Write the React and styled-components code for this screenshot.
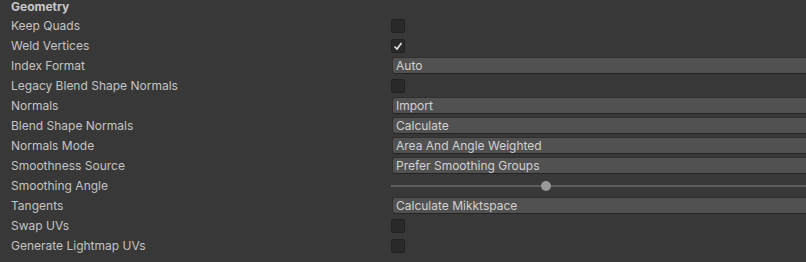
import React from "react";
import styled, { createGlobalStyle } from "styled-components";

const Global = createGlobalStyle`
  body {
    margin: 0;
    background: #383838;
    font-family: Inter, "Noto Sans", sans-serif;
    font-size: 12px;
    color: #c4c4c4;
    overflow: hidden;
  }
`;

const Panel = styled.div`
  width: 806px;
  height: 262px;
  background: #383838;
  padding-left: 11px;
  box-sizing: border-box;
  overflow: hidden;
`;

const Header = styled.div`
  height: 15px;
  line-height: 14px;
  font-weight: 700;
  color: #c8c8c8;
`;

const Row = styled.div`
  display: grid;
  grid-template-columns: 380px 1fr;
  height: 20px;
  align-items: center;
`;

const Label = styled.div`
  line-height: 20px;
  padding-top: 1px;
  white-space: nowrap;
`;

const Box = styled.div`
  width: 14px;
  height: 14px;
  box-sizing: border-box;
  background: #2a2a2a;
  border: 1px solid #212121;
  border-radius: 2px;
  display: flex;
  align-items: center;
  justify-content: center;
`;

const Dropdown = styled.div`
  margin-left: 1px;
  margin-bottom: 1px;
  height: 17px;
  box-sizing: border-box;
  background: #515151;
  border-top: 1px solid #303030;
  border-left: 1px solid #303030;
  border-bottom: 1px solid #242424;
  border-radius: 3px 0 0 3px;
  color: #d2d2d2;
  line-height: 15px;
  padding-left: 3px;
  white-space: nowrap;
`;

const Slider = styled.div`
  position: relative;
  height: 20px;
  display: flex;
  align-items: center;
`;

const Track = styled.div`
  flex: 1;
  height: 2px;
  background: #5e5e5e;
`;

const Thumb = styled.div`
  position: absolute;
  top: 5px;
  width: 10px;
  height: 10px;
  border-radius: 50%;
  background: #999999;
`;

const Check = () => (
  <svg width="10" height="10" viewBox="0 0 10 10">
    <polyline points="1.5,5.5 4,8 8.5,2" fill="none" stroke="#e6e6e6" strokeWidth="1.6" />
  </svg>
);

const rows = [
  { label: "Keep Quads", type: "box" },
  { label: "Weld Vertices", type: "box", checked: true },
  { label: "Index Format", type: "drop", value: "Auto" },
  { label: "Legacy Blend Shape Normals", type: "box" },
  { label: "Normals", type: "drop", value: "Import" },
  { label: "Blend Shape Normals", type: "drop", value: "Calculate" },
  { label: "Normals Mode", type: "drop", value: "Area And Angle Weighted" },
  { label: "Smoothness Source", type: "drop", value: "Prefer Smoothing Groups" },
  { label: "Smoothing Angle", type: "slider", value: 150 },
  { label: "Tangents", type: "drop", value: "Calculate Mikktspace" },
  { label: "Swap UVs", type: "box" },
  { label: "Generate Lightmap UVs", type: "box" },
];

export default function App() {
  return (
    <Panel>
      <Global />
      <Header>Geometry</Header>
      {rows.map((r) => (
        <Row key={r.label}>
          <Label>{r.label}</Label>
          {r.type === "box" && <Box>{r.checked && <Check />}</Box>}
          {r.type === "drop" && <Dropdown>{r.value}</Dropdown>}
          {r.type === "slider" && (
            <Slider>
              <Track />
              <Thumb style={{ left: r.value }} />
            </Slider>
          )}
        </Row>
      ))}
    </Panel>
  );
}
